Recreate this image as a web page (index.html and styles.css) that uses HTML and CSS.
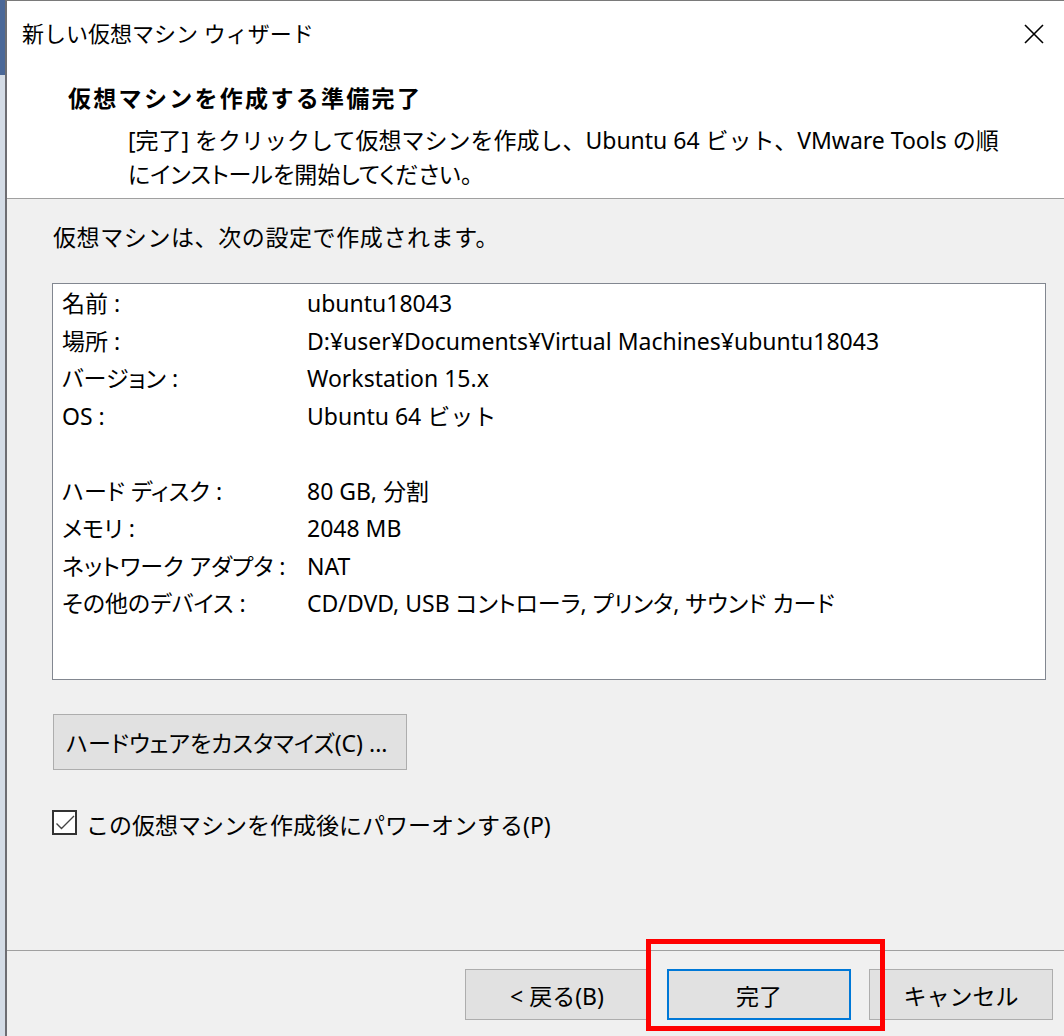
FILE: index.html
```html
<!DOCTYPE html>
<html lang="ja">
<head>
  <meta charset="UTF-8" />
  <title>新しい仮想マシン ウィザード</title>
  <link rel="stylesheet" href="styles.css">
</head>
<body>

<div class="desktop-edge"></div>

<div class="dialog">
  <div class="header">
    <div class="titlebar">
      <span class="title">新しい仮想マシン ウィザード</span>
      <svg class="close" width="20" height="20" viewBox="0 0 20 20">
        <path d="M1 1 L19 19 M19 1 L1 19" stroke="#000" stroke-width="1.6" fill="none"/>
      </svg>
    </div>
    <div class="heading">仮想マシンを作成する準備完了</div>
    <div class="desc">
      [完了] をクリックして仮想マシンを作成し、Ubuntu 64 ビット、VMware Tools の順<br>
      <span class="prop">にインストールを開始してください。</span>
    </div>
  </div>

  <div class="content">
    <p class="intro">仮想マシンは、次の設定で作成されます。</p>

    <div class="summary">
      <div class="row"><span class="key">名前 :</span><span>ubuntu18043</span></div>
      <div class="row"><span class="key">場所 :</span><span>D:¥user¥Documents¥Virtual Machines¥ubuntu18043</span></div>
      <div class="row"><span class="key">バージョン :</span><span>Workstation 15.x</span></div>
      <div class="row"><span class="key">OS :</span><span>Ubuntu 64 ビット</span></div>
      <div class="row"></div>
      <div class="row"><span class="key">ハード ディスク :</span><span>80 GB, 分割</span></div>
      <div class="row"><span class="key">メモリ :</span><span>2048 MB</span></div>
      <div class="row"><span class="key">ネットワーク アダプタ :</span><span>NAT</span></div>
      <div class="row"><span class="key">その他のデバイス :</span><span class="prop">CD/DVD, USB コントローラ, プリンタ, サウンド カード</span></div>
    </div>

    <button type="button" class="btn customize">ハードウェアをカスタマイズ(C) ...</button>

    <label class="power">
      <span class="check">
        <svg width="21" height="21" viewBox="0 0 21 21">
          <path d="M2.5 11.5 L7.5 16.5 L20 4" stroke="#444" stroke-width="1.4" fill="none"/>
        </svg>
      </span>
      この仮想マシンを作成後にパワーオンする(P)
    </label>
  </div>

  <div class="footer">
    <button type="button" class="btn">&lt; 戻る(B)</button>
    <div class="finish-wrap">
      <button type="button" class="btn default">完了</button>
      <div class="highlight"></div>
    </div>
    <button type="button" class="btn">キャンセル</button>
  </div>
</div>

</body>
</html>
```

FILE: styles.css
```css
html, body {
  margin: 0;
  padding: 0;
  height: 100%;
}

body {
  display: flex;
  font-family: "Noto Sans", "Noto Sans CJK JP", sans-serif;
  font-size: 23px;
  color: #000;
  overflow: hidden;
}

.desktop-edge {
  width: 5px;
  background: linear-gradient(#4b6898 0, #4b6898 75px, #d4dce6 75px);
}

.dialog {
  flex: 1;
  display: flex;
  flex-direction: column;
  border-left: 2px solid #6d6d72;
  border-top: 1px solid #7a7a7a;
  background: #f0f0f0;
}

/* proportional kana, closer to the Windows UI font */
.prop {
  font-feature-settings: "palt";
}

.header {
  background: #ffffff;
  padding: 17px 0 7px 0;
  border-bottom: 1px solid #a0a0a0;
}

.titlebar {
  display: flex;
  align-items: center;
  justify-content: space-between;
  height: 30px;
  padding: 0 20px 0 15px;
}

.title {
  font-size: 22px;
  line-height: 30px;
}

.close {
  margin-top: 2px;
}

.heading {
  margin: 35px 0 0 61px;
  font-weight: bold;
  line-height: 30px;
  letter-spacing: 2.3px;
}

.desc {
  margin: 10px 0 0 121px;
  line-height: 34px;
}

.content {
  flex: 1;
  padding: 23px 0 0 45px;
}

.intro {
  margin: 0 0 31px 1px;
  line-height: 30px;
  letter-spacing: 0.6px;
}

.summary {
  width: 992px;
  height: 394px;
  box-sizing: content-box;
  background: #ffffff;
  border: 1px solid #828790;
  padding-top: 1px;
}

.row {
  display: flex;
  height: 37.5px;
  line-height: 37.5px;
  padding-left: 9px;
}

.key {
  width: 245px;
  flex-shrink: 0;
  font-feature-settings: "palt";
}

.btn {
  font-family: inherit;
  font-size: 23px;
  color: #000;
  background: #e1e1e1;
  border: 1px solid #adadad;
  width: 184px;
  height: 51px;
  padding: 0;
  margin: 0;
}

.customize {
  display: block;
  box-sizing: border-box;
  width: 354px;
  height: 56px;
  margin: 34px 0 0 1px;
  padding: 0 12px;
  text-align: left;
  white-space: nowrap;
  font-feature-settings: "palt";
}

.power {
  display: flex;
  align-items: center;
  margin-top: 40px;
  line-height: 30px;
}

.check {
  width: 21px;
  height: 21px;
  border: 2px solid #333;
  background: #fff;
  margin-right: 9px;
  margin-top: -5px;
}

.check svg {
  display: block;
}

.footer {
  display: flex;
  justify-content: flex-end;
  gap: 18px;
  border-top: 1px solid #a0a0a0;
  padding: 18px 11px 0 0;
  height: 67px;
}

.finish-wrap {
  position: relative;
}

.btn.default {
  border: 2px solid #0078d7;
}

.highlight {
  position: absolute;
  left: -21px;
  top: -30px;
  width: 229px;
  height: 82px;
  border: 5px solid #ff0000;
}
```
